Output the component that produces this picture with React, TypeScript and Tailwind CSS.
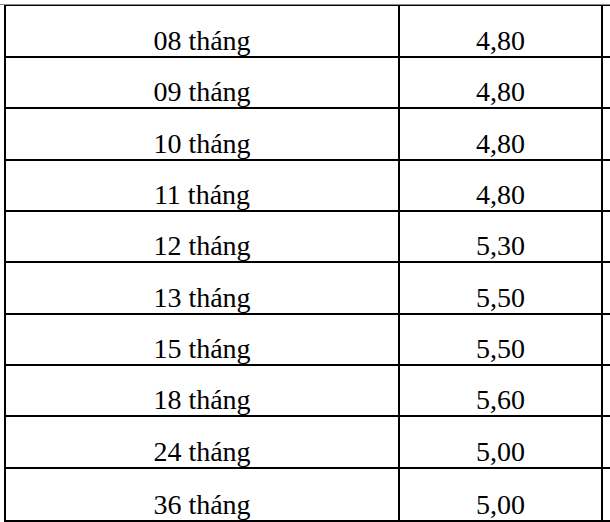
const rows: [string, string][] = [
  ["08 tháng", "4,80"],
  ["09 tháng", "4,80"],
  ["10 tháng", "4,80"],
  ["11 tháng", "4,80"],
  ["12 tháng", "5,30"],
  ["13 tháng", "5,50"],
  ["15 tháng", "5,50"],
  ["18 tháng", "5,60"],
  ["24 tháng", "5,00"],
  ["36 tháng", "5,00"],
];

function Cell({ text, className }: { text: string; className: string }) {
  return (
    <div className={`flex items-end justify-center pb-[1px] ${className}`}>
      <span className="text-[28px] leading-none text-black">{text}</span>
    </div>
  );
}

export default function App() {
  return (
    <div className="h-[522px] w-[610px] overflow-hidden bg-white font-['Liberation_Serif','Times_New_Roman',serif]">
      <div className="mt-[4px] h-px w-full bg-[#8a8a8a]" />
      <div className="ml-[4px] w-[700px] border-t border-b-2 border-l-2 border-black">
        {rows.map(([term, rate], i) => (
          <div
            key={term}
            className={`grid grid-cols-[394px_203px_1fr] ${
              i === 0 ? "h-[52px]" : "h-[51.33px]"
            } ${i < rows.length - 1 ? "border-b-2 border-black" : ""}`}
          >
            <Cell text={term} className="border-r-2 border-black" />
            <Cell text={rate} className="border-r-2 border-black" />
            <div />
          </div>
        ))}
      </div>
    </div>
  );
}
